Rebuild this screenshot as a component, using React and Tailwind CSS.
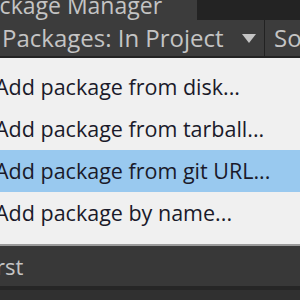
import React from 'react';

const items = [
  { label: 'Add package from disk...' },
  { label: 'Add package from tarball...' },
  { label: 'Add package from git URL...', active: true },
  { label: 'Add package by name...' },
];

export default function App() {
  return (
    <div className="w-[300px] h-[300px] overflow-hidden bg-[#383838] font-['Segoe_UI','Open_Sans','Noto_Sans',sans-serif]">
      {/* Window title */}
      <div className="flex h-[20px] bg-[#3c3c3c]">
        <div className="w-[197px] shrink-0 overflow-hidden">
          <div className="-mt-[10px] -ml-[27px] whitespace-nowrap text-[23px] leading-[30px] text-[#c4c4c4]">
            Package Manager
          </div>
        </div>
        <div className="flex-1 bg-[#232323]" />
      </div>

      {/* Toolbar */}
      <div className="flex h-[38px] items-center overflow-hidden bg-[#3c3c3c] border-b-2 border-[#232323]">
        <div className="flex h-full w-[265px] shrink-0 items-center border-r border-[#222]">
          <span className="pl-[2px] whitespace-nowrap text-[24px] text-[#c4c4c4]">Packages: In Project</span>
          <svg className="ml-auto mr-[8px]" width="14" height="9" viewBox="0 0 14 9">
            <path d="M0 0h14L7 9z" fill="#c4c4c4" />
          </svg>
        </div>
        <span className="pl-[9px] whitespace-nowrap text-[24px] text-[#c4c4c4]">Sort</span>
      </div>

      {/* Context menu */}
      <div className="bg-[#f0f0f0] pt-[8px] pb-[10px] border-b-2 border-[#9a9a9a]">
        {items.map((it) => (
          <div
            key={it.label}
            className={`flex h-[42px] items-center ${it.active ? 'bg-[#99c9ef]' : ''}`}
          >
            <span className="-ml-[5px] whitespace-nowrap text-[21.5px] text-[#1a1a2a]">{it.label}</span>
          </div>
        ))}
      </div>

      {/* Package list */}
      <div className="h-[44px] flex items-center border-b-4 border-[#262626] bg-[#383838]">
        <span className="-ml-[21px] whitespace-nowrap text-[22px] text-[#c4c4c4]">First</span>
      </div>
      <div className="h-[20px] bg-[#303030]" />
    </div>
  );
}
